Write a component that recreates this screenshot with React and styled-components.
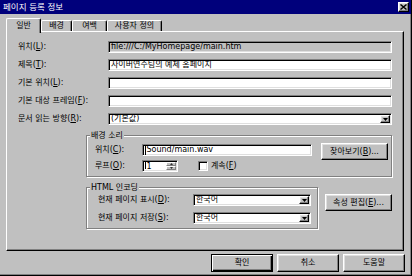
import React from 'react';
import styled, { createGlobalStyle, css } from 'styled-components';

const GlobalStyle = createGlobalStyle`
  html, body {
    margin: 0;
    padding: 0;
    background: #c0c0c0;
  }
  body {
    font-family: "DejaVu Sans", "Noto Sans CJK KR", sans-serif;
    font-size: 8px;
    color: #000;
  }
`;

const sunken = css`
  border: 1px solid;
  border-color: #808080 #fff #fff #808080;
  box-shadow: inset 1px 1px #000, inset -1px -1px #dfdfdf;
`;

const raised = css`
  border: 1px solid;
  border-color: #fff #000 #000 #fff;
  box-shadow: inset -1px -1px #808080, inset 1px 1px #dfdfdf;
`;

const Window = styled.div`
  width: 412px;
  height: 276px;
  box-sizing: border-box;
  display: flex;
  flex-direction: column;
  background: #c0c0c0;
  border-right: 1px solid #000;
  border-bottom: 1px solid #000;
  box-shadow: inset -1px -1px #808080;
`;

const TitleBar = styled.div`
  height: 14px;
  flex: none;
  display: flex;
  align-items: center;
  justify-content: space-between;
  padding: 0 2px 0 3px;
  background: #00007b;
  color: #fff;
  font-size: 8.5px;
  line-height: 12px;
`;

const CloseButton = styled.div`
  width: 11px;
  height: 10px;
  box-sizing: border-box;
  display: flex;
  align-items: center;
  justify-content: center;
  background: #c0c0c0;
  ${raised};
`;

const Body = styled.div`
  display: flex;
  flex-direction: column;
  padding: 4px 7px 0 6px;
`;

const TabRow = styled.div`
  display: flex;
  align-items: flex-end;
  height: 13px;
  position: relative;
  z-index: 2;
`;

const Tab = styled.div`
  width: ${p => p.$w}px;
  height: ${p => (p.$active ? 15 : 11)}px;
  margin-bottom: ${p => (p.$active ? -2 : 0)}px;
  box-sizing: border-box;
  display: flex;
  align-items: ${p => (p.$active ? 'flex-start' : 'center')};
  padding-top: ${p => (p.$active ? 2 : 0)}px;
  justify-content: center;
  background: #c0c0c0;
  border-top: 1px solid #fff;
  border-left: 1px solid #fff;
  border-right: 1px solid #000;
  border-radius: 2px 2px 0 0;
  box-shadow: inset -1px 0 #808080;
  line-height: 10px;
`;

const Panel = styled.div`
  width: 398px;
  height: 220px;
  box-sizing: border-box;
  display: flex;
  flex-direction: column;
  padding: 9px 11px 0 11px;
  border: 1px solid;
  border-color: #fff #000 #000 #fff;
  box-shadow: inset -1px -1px #808080;
`;

const Rows = styled.div`
  display: flex;
  flex-direction: column;
  gap: 6px;
`;

const FormRow = styled.div`
  display: grid;
  grid-template-columns: 90px 1fr;
  align-items: center;
  height: 12px;
  line-height: 10px;
`;

const Label = styled.span`
  white-space: nowrap;
`;

const TextField = styled.div`
  height: 12px;
  width: ${p => (p.$w ? `${p.$w}px` : 'auto')};
  box-sizing: border-box;
  display: flex;
  align-items: center;
  padding: 0 2px;
  background: ${p => (p.$readOnly ? '#c0c0c0' : '#fff')};
  ${sunken};
  white-space: nowrap;
  overflow: hidden;
  line-height: 10px;
`;

const Combo = styled(TextField)`
  justify-content: space-between;
  padding: 1px 1px 1px 2px;
`;

const DropButton = styled.div`
  width: 10px;
  height: 100%;
  box-sizing: border-box;
  display: flex;
  align-items: center;
  justify-content: center;
  background: #c0c0c0;
  ${raised};
`;

const Caret = styled.span`
  display: inline-block;
  width: 1px;
  height: 9px;
  background: #000;
  margin-right: 0.5px;
`;

const GroupBox = styled.div`
  display: flex;
  flex-direction: column;
  width: ${p => (p.$w ? `${p.$w}px` : 'auto')};
  box-sizing: border-box;
  margin: ${p => p.$mt}px 0 0 ${p => p.$ml}px;
  padding: 0 2px 4px 7px;
  border: 1px solid #808080;
  box-shadow: inset 1px 1px #fff, 1px 1px #fff;
`;

const Caption = styled.span`
  align-self: flex-start;
  margin: -6px 0 0 -4px;
  padding: 0 1px;
  background: #c0c0c0;
  line-height: 11px;
  white-space: nowrap;
`;

const GroupGrid = styled.div`
  display: grid;
  grid-template-columns: ${p => p.$cols};
  grid-template-rows: 12px 12px;
  row-gap: ${p => p.$gap}px;
  align-items: center;
  margin: ${p => p.$mt}px 0 0 ${p => p.$ml}px;
  line-height: 10px;
`;

const Button = styled.div`
  width: ${p => p.$w}px;
  height: ${p => p.$h}px;
  box-sizing: border-box;
  display: flex;
  align-items: center;
  justify-content: center;
  background: #c0c0c0;
  white-space: nowrap;
  line-height: 10px;
  ${raised};
  ${p =>
    p.$default &&
    css`
      border: 1px solid #000;
      box-shadow: inset 1px 1px #fff, inset -1px -1px #000, inset -2px -2px #808080;
    `}
`;

const SideButton = styled(Button)`
  align-self: start;
  margin-top: ${p => p.$mt || 0}px;
  margin-left: ${p => p.$ml || 0}px;
`;

const LoopCell = styled.div`
  display: flex;
  align-items: center;
`;

const Spinner = styled(TextField)`
  padding: 1px 1px 1px 2px;
  justify-content: space-between;
`;

const SpinButtons = styled.div`
  width: 10px;
  height: 100%;
  display: flex;
  flex-direction: column;
`;

const SpinPart = styled.div`
  flex: 1;
  box-sizing: border-box;
  display: flex;
  align-items: center;
  justify-content: center;
  background: #c0c0c0;
  border: 1px solid;
  border-color: #fff #808080 #808080 #fff;
`;

const CheckBox = styled.div`
  width: 10px;
  height: 10px;
  box-sizing: border-box;
  margin: 0 3px 0 20px;
  background: #fff;
  ${sunken};
`;

const GroupRow = styled.div`
  display: flex;
  align-items: flex-start;
`;

const Footer = styled.div`
  display: flex;
  justify-content: flex-end;
  gap: 4px;
  margin: 3px -1px 0 0;
`;

const DownArrow = () => (
  <svg width="5" height="3" viewBox="0 0 5 3">
    <polygon points="0,0 5,0 2.5,3" fill="#000" />
  </svg>
);

const UpArrow = () => (
  <svg width="3" height="2" viewBox="0 0 4 2">
    <polygon points="0,2 4,2 2,0" fill="#000" />
  </svg>
);

const SmallDown = () => (
  <svg width="3" height="2" viewBox="0 0 4 2">
    <polygon points="0,0 4,0 2,2" fill="#000" />
  </svg>
);

const tabs = [
  { name: '일반', w: 35, active: true },
  { name: '배경', w: 31 },
  { name: '여백', w: 35 },
  { name: '사용자 정의', w: 55 },
];

const fields = [
  { label: <>위치(<u>L</u>):</>, value: 'file:///C:/MyHomepage/main.htm', readOnly: true },
  { label: <>제목(<u>T</u>):</>, value: '사이버연수팀의 예제 홈페이지' },
  { label: <>기본 위치(<u>L</u>):</>, value: '' },
  { label: <>기본 대상 프레임(<u>F</u>):</>, value: '' },
];

export default function App() {
  return (
    <>
      <GlobalStyle />
      <Window>
        <TitleBar>
          <span>페이지 등록 정보</span>
          <CloseButton>
            <svg width="7" height="6" viewBox="0 0 7 6">
              <path d="M0.5 0.5 L6.5 5.5 M6.5 0.5 L0.5 5.5" stroke="#000" strokeWidth="1.4" />
            </svg>
          </CloseButton>
        </TitleBar>
        <Body>
          <TabRow>
            {tabs.map(t => (
              <Tab key={t.name} $w={t.w} $active={t.active}>
                {t.name}
              </Tab>
            ))}
          </TabRow>
          <Panel>
            <Rows>
              {fields.map((f, i) => (
                <FormRow key={i}>
                  <Label>{f.label}</Label>
                  <TextField $readOnly={f.readOnly}>{f.value}</TextField>
                </FormRow>
              ))}
              <FormRow>
                <Label>문서 읽는 방향(<u>R</u>):</Label>
                <Combo>
                  <span>(기본값)</span>
                  <DropButton><DownArrow /></DropButton>
                </Combo>
              </FormRow>
            </Rows>

            <GroupBox $mt={10} $ml={68}>
              <Caption>배경 소리</Caption>
              <GroupGrid $cols="47px 170px 76px" $gap={4} $mt={3} $ml={1}>
                <Label>위치(<u>C</u>):</Label>
                <TextField><Caret />Sound/main.wav</TextField>
                <SideButton $w={67} $h={17} $mt={-1} $ml={9}>찾아보기(<u>B</u>)...</SideButton>
                <Label>루프(<u>O</u>):</Label>
                <LoopCell>
                  <Spinner $w={36}>
                    <span><Caret />1</span>
                    <SpinButtons>
                      <SpinPart><UpArrow /></SpinPart>
                      <SpinPart><SmallDown /></SpinPart>
                    </SpinButtons>
                  </Spinner>
                  <CheckBox />
                  <Label>계속(<u>F</u>)</Label>
                </LoopCell>
              </GroupGrid>
            </GroupBox>

            <GroupRow>
              <GroupBox $mt={10} $ml={68} $w={232}>
                <Caption>HTML 인코딩</Caption>
                <GroupGrid $cols="95px 118px" $gap={6} $mt={1} $ml={4}>
                  <Label>현재 페이지 표시(<u>D</u>):</Label>
                  <Combo>
                    <span>한국어</span>
                    <DropButton><DownArrow /></DropButton>
                  </Combo>
                  <Label>현재 페이지 저장(<u>S</u>):</Label>
                  <Combo>
                    <span>한국어</span>
                    <DropButton><DownArrow /></DropButton>
                  </Combo>
                </GroupGrid>
              </GroupBox>
              <SideButton $w={67} $h={17} $mt={17} $ml={7}>속성 편집(<u>E</u>)...</SideButton>
            </GroupRow>
          </Panel>
          <Footer>
            <Button $w={62} $h={18} $default>확인</Button>
            <Button $w={62} $h={18}>취소</Button>
            <Button $w={62} $h={18}>도움말</Button>
          </Footer>
        </Body>
      </Window>
    </>
  );
}
